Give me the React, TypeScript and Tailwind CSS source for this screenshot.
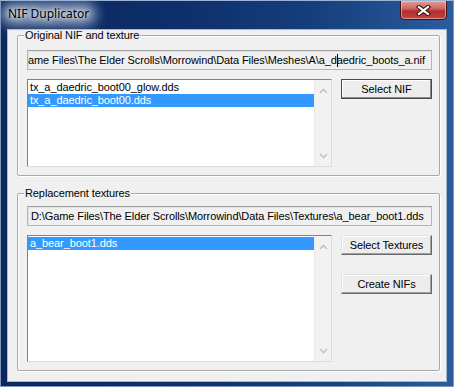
import React from "react";

const font = "font-['Liberation_Sans',Arial,sans-serif]";

export default function App() {
  return (
    <div
      className={`relative w-[454px] h-[387px] overflow-hidden border border-[#7f96bd] border-t-[#9db3d6] bg-[linear-gradient(90deg,#0b285e_0%,#0e2f6b_40%,#163f7d_70%,#2a5d9f_100%)] ${font} text-[11px] tracking-[-0.1px] text-black`}
    >
      <TitleBar />

      {/* client area */}
      <div className="ml-[6px] w-[440px] h-[353px] border border-[#a4b6d2] bg-[#f0f0f0]">
        <GroupBox label="Original NIF and texture" className="mt-0" top="pt-[10px]">
          <PathBox shift="-ml-[8px]">
            game Files\The Elder Scrolls\Morrowind\Data Files\Meshes\A\a_d
            <span className="inline-block w-px h-[13px] bg-black align-middle -mr-px" />
            aedric_boots_a.nif
          </PathBox>
          <div className="mt-[9px] flex gap-[9px]">
            <ListBox
              height="h-[88px]"
              items={["tx_a_daedric_boot00_glow.dds", "tx_a_daedric_boot00.dds"]}
              selected={1}
            />
            <div className="flex flex-col">
              <WinButton label="Select NIF" primary />
            </div>
          </div>
        </GroupBox>

        <GroupBox label="Replacement textures" className="mt-[12px]" top="pt-[8px]">
          <PathBox shift="ml-px">
            D:\Game Files\The Elder Scrolls\Morrowind\Data Files\Textures\a_bear_boot1.dds
          </PathBox>
          <div className="mt-[9px] flex gap-[9px]">
            <ListBox height="h-[127px]" items={["a_bear_boot1.dds"]} selected={0} />
            <div className="flex flex-col gap-[19px]">
              <WinButton label="Select Textures" />
              <WinButton label="Create NIFs" />
            </div>
          </div>
        </GroupBox>
      </div>
    </div>
  );
}

function TitleBar() {
  return (
    <div className="h-[28px] flex items-start pl-[7px] pt-[5px]">
      <span className="relative font-['Noto_Sans',sans-serif] text-[12px] leading-[16px] tracking-normal text-black">
        {/* aero glow behind caption */}
        <span className="absolute -inset-x-[8px] -inset-y-[4px] rounded-full bg-[rgba(225,236,250,0.55)] blur-[6px]" />
        <span className="relative [text-shadow:0_0_4px_#fff,0_0_8px_rgba(255,255,255,0.9)]">
          NIF Duplicator
        </span>
      </span>
      <button className="absolute -top-px right-[6px] w-[47px] h-[20px] rounded-b-[4px] border border-[#3d1414] shadow-[inset_0_0_0_1px_rgba(255,210,200,0.55)] bg-[linear-gradient(#e0a196_0%,#c8615c_45%,#b22d31_55%,#c4443f_100%)] flex items-center justify-center">
        <svg width="15" height="11" viewBox="0 0 15 11">
          <path d="M3 2 L12 9 M12 2 L3 9" stroke="#3a1212" strokeWidth="4.2" strokeLinecap="square" />
          <path d="M3 2 L12 9 M12 2 L3 9" stroke="#ffffff" strokeWidth="2.2" strokeLinecap="square" />
        </svg>
      </button>
    </div>
  );
}

function GroupBox({
  label,
  className,
  top,
  children,
}: {
  label: string;
  className: string;
  top: string;
  children: React.ReactNode;
}) {
  return (
    <fieldset
      className={`ml-[9px] w-[423px] border border-[#a9a9a9] rounded-[2px] shadow-[inset_1px_1px_0_#fff,1px_1px_0_#fff] ${className}`}
    >
      <legend className="ml-[6px] px-[1px] leading-[10px] bg-[#f0f0f0]">{label}</legend>
      <div className={`pl-[9px] pr-[7px] pb-[8px] ${top}`}>{children}</div>
    </fieldset>
  );
}

function PathBox({ shift, children }: { shift: string; children: React.ReactNode }) {
  return (
    <div className="h-[20px] w-[405px] border border-[#b4b4b4] border-t-[#a0a0a0] bg-[#f0f0f0] flex items-center pl-[2px] overflow-hidden whitespace-nowrap shadow-[inset_1px_1px_0_#e3e3e3]">
      <span className={`shrink-0 ${shift}`}>{children}</span>
    </div>
  );
}

function ListBox({
  height,
  items,
  selected,
}: {
  height: string;
  items: string[];
  selected: number;
}) {
  return (
    <div
      className={`${height} w-[305px] border border-[#828282] border-b-[#dcdcdc] border-r-[#dcdcdc] bg-white flex`}
    >
      <div className="flex-1 pt-px">
        {items.map((it, i) => (
          <div
            key={it}
            className={`h-[13px] leading-[13px] pl-[2px] whitespace-nowrap ${
              i === selected ? "bg-[#3399ff] text-white" : ""
            }`}
          >
            {it}
          </div>
        ))}
      </div>
      <div className="w-[17px] bg-[#f2f2f2] border-l border-[#e9e9e9] flex flex-col justify-between items-center pt-[8px] pb-[7px]">
        <svg width="9" height="6" viewBox="0 0 9 6">
          <path d="M1 5 L4.5 1.5 L8 5" fill="none" stroke="#c3c3c3" strokeWidth="1.6" />
        </svg>
        <svg width="9" height="6" viewBox="0 0 9 6">
          <path d="M1 1 L4.5 4.5 L8 1" fill="none" stroke="#c3c3c3" strokeWidth="1.6" />
        </svg>
      </div>
    </div>
  );
}

function WinButton({ label, primary }: { label: string; primary?: boolean }) {
  return (
    <button
      className={`w-[91px] h-[20px] bg-[#ededed] text-[11px] flex items-center justify-center ${
        primary
          ? "border border-[#4a4a4a] shadow-[inset_-1px_-1px_0_#888,inset_1px_1px_0_#fff]"
          : "border border-t-[#e3e3e3] border-l-[#e3e3e3] border-r-[#696969] border-b-[#696969] shadow-[inset_-1px_-1px_0_#a0a0a0,inset_1px_1px_0_#fff]"
      }`}
    >
      {label}
    </button>
  );
}
